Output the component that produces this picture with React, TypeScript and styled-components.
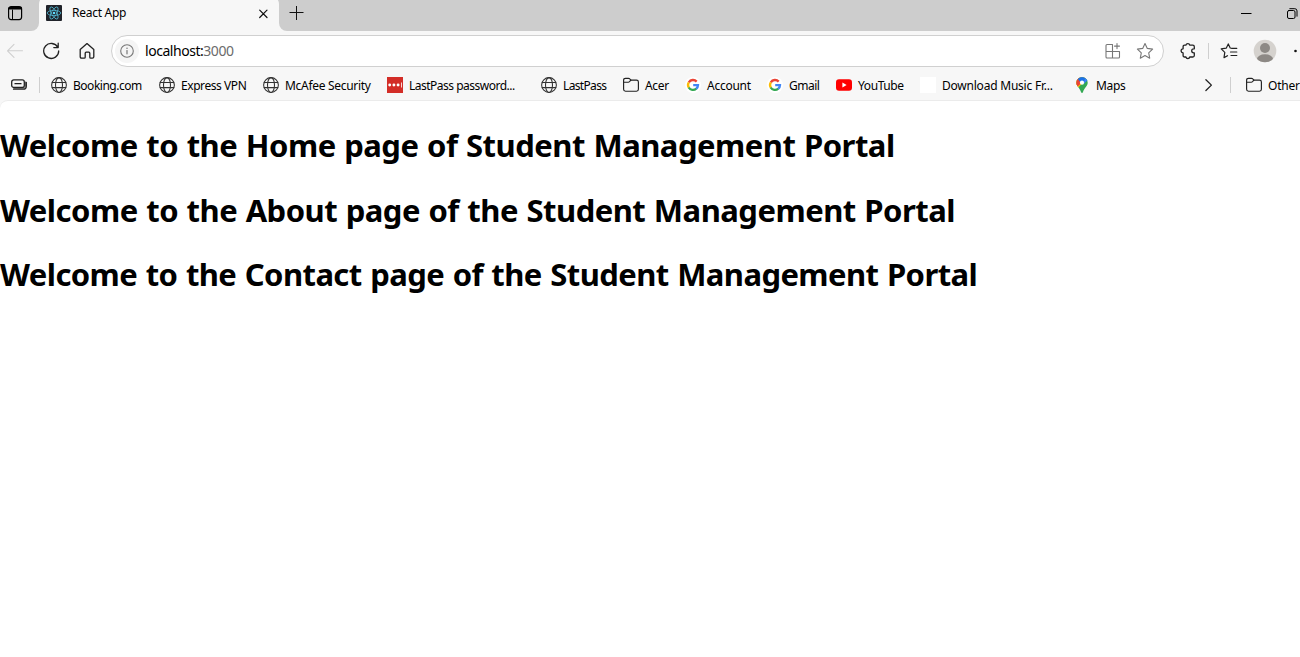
import React from 'react';
import styled, { createGlobalStyle } from 'styled-components';

const GlobalStyle = createGlobalStyle`
  html, body { margin: 0; background: #fff; overflow: hidden; }
  * { box-sizing: border-box; }
  svg { display: block; flex: none; }
`;

const Browser = styled.div`
  width: 1300px;
  height: 657px;
  overflow: hidden;
  background: #f7f7f7;
  color: #000;
  font-family: 'Noto Sans', 'Open Sans', sans-serif;
  display: flex;
  flex-direction: column;
`;

const TabBar = styled.header`
  display: flex;
  flex: none;
  height: 31px;
`;

const TabActions = styled.div`
  width: 39px;
  padding: 6px 0 0 8px;
  background: #cdcdcd;
  border-bottom-right-radius: 8px;
`;

const TabSlot = styled.div`
  width: 240px;
  background: linear-gradient(#cdcdcd 10px, #f7f7f7 10px);
  overflow: hidden;
`;

const Tab = styled.div`
  height: 35px;
  margin-top: -4px;
  padding: 9px 8px 0 7px;
  display: flex;
  align-items: flex-start;
  background: #f7f7f7;
  border-radius: 8px 8px 0 0;
`;

const TabTitle = styled.span`
  flex: 1;
  margin: -1px 0 0 10px;
  font-size: 12px;
  line-height: 17px;
  letter-spacing: -0.27px;
`;

const CloseSlot = styled.span`
  padding-top: 3px;
`;

const WindowBar = styled.div`
  flex: 1;
  display: flex;
  justify-content: space-between;
  padding: 6px 2px 0 10px;
  background: #cdcdcd;
  border-bottom-left-radius: 8px;
`;

const WindowButtons = styled.div`
  display: flex;
  gap: 35px;
  padding-top: 2px;
`;

const Toolbar = styled.nav`
  display: flex;
  flex: none;
  align-items: center;
  height: 40px;
  padding-left: 6px;
`;

const NavButtons = styled.div`
  display: flex;
  flex: none;
  gap: 18px;
  width: 105px;
`;

const AddressBar = styled.div`
  display: flex;
  flex: none;
  align-items: center;
  width: 1053px;
  height: 32px;
  padding: 0 9px 0 3px;
  background: #fff;
  border: 1px solid #d0d0d0;
  border-radius: 16px;
`;

const SiteInfo = styled.span`
  display: grid;
  place-items: center;
  width: 24px;
  height: 24px;
  border-radius: 50%;
  background: #f5f5f5;
`;

const Url = styled.span`
  flex: 1;
  margin-left: 6px;
  font-size: 14px;
  line-height: 20px;
  letter-spacing: -0.46px;
`;

const Port = styled.span`
  color: #6b6b6b;
`;

const AddressActions = styled.div`
  display: flex;
  gap: 14px;
`;

const ToolbarActions = styled.div`
  display: flex;
  align-items: center;
  flex: none;
  padding-left: 15px;
`;

const Divider = styled.span<{ $before: number; $after: number }>`
  flex: none;
  width: 1px;
  height: 16px;
  margin: 0 ${p => p.$after}px 0 ${p => p.$before}px;
  background: #cfcfcf;
`;

const AvatarSlot = styled.span`
  margin: 0 17px 0 15px;
`;

const BookmarkBar = styled.nav`
  display: flex;
  align-items: center;
  flex: none;
  height: 29px;
  padding: 0 0 1px 11px;
`;

const Bookmarks = styled.div`
  display: flex;
  flex: none;
  gap: 16px;
  width: 1152px;
`;

const Bookmark = styled.a`
  display: flex;
  align-items: center;
  gap: 6px;
  flex: none;
  height: 16px;
`;

const BookmarkLabel = styled.span<{ $width: number; $spacing: number }>`
  width: ${p => p.$width}px;
  font-size: 12px;
  line-height: 17px;
  letter-spacing: ${p => p.$spacing}px;
  white-space: nowrap;
`;

const BlankIcon = styled.span`
  width: 16px;
  height: 16px;
  background: #fff;
`;

const Page = styled.main`
  flex: 1;
  border-top: 1px solid #ebebeb;
  border-top-left-radius: 8px;
  background: #fff;
  padding-top: 22px;
`;

const Heading = styled.h1<{ $spacing: number; $gap: number }>`
  margin: 0 0 ${p => p.$gap}px;
  font-size: 31px;
  line-height: 44px;
  font-weight: 700;
  letter-spacing: ${p => p.$spacing}px;
  word-spacing: 1px;
  white-space: nowrap;
`;

const line = { fill: 'none', stroke: '#222', strokeLinecap: 'round', strokeLinejoin: 'round' } as const;

const TabActionsIcon = () => (
  <svg width="15" height="15" viewBox="0 0 15 15" {...line} stroke="#000">
    <rect x="0.6" y="0.6" width="13" height="13" rx="2.5" strokeWidth="1.2" />
    <path d="M1.6 2.3h11" strokeWidth="2.6" />
    <path d="M4.5 4v9.5" />
  </svg>
);

const ReactIcon = () => (
  <svg width="16" height="16" viewBox="0 0 16 16">
    <rect width="16" height="16" rx="1" fill="#20232a" />
    <g fill="none" stroke="#53b8d2" strokeWidth="0.8">
      <ellipse cx="8" cy="8" rx="6.8" ry="2.6" />
      <ellipse cx="8" cy="8" rx="6.8" ry="2.6" transform="rotate(60 8 8)" />
      <ellipse cx="8" cy="8" rx="6.8" ry="2.6" transform="rotate(120 8 8)" />
    </g>
    <circle cx="8" cy="8" r="1.3" fill="#61dafb" />
  </svg>
);

const CloseIcon = () => (
  <svg width="15" height="12" viewBox="0 0 15 12" {...line} stroke="#111" strokeWidth="1.2">
    <path d="M3.7 2.2 11 9.5M11 2.2 3.7 9.5" />
  </svg>
);

const PlusIcon = () => (
  <svg width="15" height="15" viewBox="0 0 15 15" {...line} stroke="#111" strokeLinecap="butt">
    <path d="M7.5 0v14M0.5 6.5h14" />
  </svg>
);

const MinimizeIcon = () => (
  <svg width="11" height="11" viewBox="0 0 11 11" {...line} stroke="#000" strokeLinecap="butt">
    <path d="M0 5.5h10.5" />
  </svg>
);

const RestoreIcon = () => (
  <svg width="11" height="11" viewBox="0 0 11 11" {...line} stroke="#000">
    <rect x="0.5" y="2.5" width="7.5" height="8" rx="1.5" />
    <path d="M2.8 0.7h5a2.2 2.2 0 0 1 2.2 2.2v5.3" />
  </svg>
);

const BackIcon = () => (
  <svg width="18" height="18" viewBox="0 0 18 18" {...line} stroke="#cfcfcf" strokeWidth="1.1">
    <path d="M8 2.3 1.5 8.8 8 15.3M1.8 8.8H16.5" />
  </svg>
);

const ReloadIcon = () => (
  <svg width="18" height="18" viewBox="0 0 18 18" {...line} strokeWidth="1.3">
    <path d="M15.8 5.4A7.5 7.5 0 1 0 16.7 9M16.2 1.2v4.4h-4.4" />
  </svg>
);

const HomeIcon = () => (
  <svg width="18" height="18" viewBox="0 0 18 18" {...line} strokeWidth="1.3">
    <path d="M2.2 7.6 9 1.6l6.8 6v7.2q0 1.4-1.4 1.4h-1.6q-1 0-1-1v-4q0-1-1-1H8.2q-1 0-1 1v4q0 1-1 1H3.6q-1.4 0-1.4-1.4z" />
  </svg>
);

const InfoIcon = () => (
  <svg width="14" height="14" viewBox="0 0 14 14" {...line} stroke="#777">
    <circle cx="7" cy="7" r="6.3" strokeWidth="1.1" />
    <path d="M7 6.5v3.3" strokeWidth="1.2" />
    <circle cx="7" cy="4.3" r=".75" fill="#777" stroke="none" />
  </svg>
);

const AppsIcon = () => (
  <svg width="18" height="18" viewBox="0 0 18 18" {...line} stroke="#777" strokeWidth="1.1">
    <path d="M8.5 2.5H3q-1 0-1 1V15q0 1 1 1h11.5q1 0 1-1V9.5H2M8.5 2.5V16" />
    <path d="M13 1.6v5M10.5 4.1h5" />
  </svg>
);

const StarIcon = () => (
  <svg width="18" height="18" viewBox="0 0 18 18" {...line} stroke="#777" strokeWidth="1.1">
    <path d="m9 1.5 2.3 4.9 5.3.7-3.9 3.7 1 5.4L9 13.6l-4.7 2.6 1-5.4L1.4 7.1l5.3-.7z" />
  </svg>
);

const PuzzleIcon = () => (
  <svg width="18" height="18" viewBox="0 0 18 18" {...line} strokeWidth="1.3">
    <path d="M6.9 3.2a2 2 0 0 1 3.9 0h3q1.5 0 1.5 1.5v2.1h-.6a2 2 0 0 0 0 4h.6v2.7q0 1.5-1.5 1.5h-3a2 2 0 0 1-3.9 0H5.6q-1.500 0-1.500-1.500v-2.700a2 2 0 0 1 0-4V4.700q0-1.500 1.500-1.500z" />
  </svg>
);

const FavoritesIcon = () => (
  <svg width="18" height="18" viewBox="0 0 18 18" {...line} strokeWidth="1.2">
    <path d="M12 6.3 10.2 6 8.3 1.9 6.2 6.2l-5 .7 3.6 3.5-.8 5.2 3.5-1.9M11.8 6.3h5M10.5 10h6.3M11 13.5h5.8" />
  </svg>
);

const AvatarIcon = () => (
  <svg width="24" height="24" viewBox="0 0 24 24">
    <clipPath id="avatar-clip"><circle cx="12" cy="12" r="11.3" /></clipPath>
    <circle cx="12" cy="12" r="11.3" fill="#d5d2ce" />
    <g fill="#8d8985" clipPath="url(#avatar-clip)">
      <circle cx="12" cy="9" r="5" />
      <ellipse cx="12" cy="20" rx="8" ry="4.7" />
    </g>
  </svg>
);

const MoreIcon = () => (
  <svg width="18" height="4" viewBox="0 0 18 4" fill="#111">
    <circle cx="1.5" cy="2" r="1.3" />
    <circle cx="8" cy="2" r="1.3" />
    <circle cx="14.500" cy="2" r="1.3" />
  </svg>
);

const WorkspaceIcon = () => (
  <svg width="16" height="12" viewBox="0 0 16 12" {...line} strokeWidth="1.3">
    <rect x="0.7" y="0.9" width="12.6" height="7.6" rx="2" />
    <path d="M4 4.7h6M2.5 10.2h9.8q3 0 3-3V3.3" />
    <path d="M3 9.6h9.5q2-.4 2-2V3" strokeWidth="1" stroke="#555" />
  </svg>
);

const GlobeIcon = () => (
  <svg width="16" height="16" viewBox="0 0 16 16" {...line} stroke="#333" strokeWidth="1.05">
    <circle cx="8" cy="8" r="7.4" />
    <ellipse cx="8" cy="8" rx="3.5" ry="7.4" />
    <path d="M1.2 5.4h13.6M1.2 10.6h13.6" />
  </svg>
);

const LastPassIcon = () => (
  <svg width="16" height="16" viewBox="0 0 16 16">
    <rect width="16" height="16" fill="#d32d27" />
    <g fill="#fff">
      <circle cx="2.7" cy="8" r="1.45" />
      <circle cx="6.9" cy="8" r="1.45" />
      <circle cx="11.1" cy="8" r="1.45" />
      <rect x="14" y="5.5" width=".8" height="5" />
    </g>
  </svg>
);

const FolderIcon = () => (
  <svg width="16" height="16" viewBox="0 0 16 16" {...line} strokeWidth="1.15">
    <path d="M.6 3.2q0-1.900 1.900-1.900h3q.8 0 1.300.6l1.100 1.200h5.600q1.900 0 1.900 1.900v7.300q0 1.900-1.900 1.900h-11Q.6 14.200.6 12.300z" />
    <path d="M.8 5.2h4.500q.7 0 1.200-.5l1.400-1.500" />
  </svg>
);

const GoogleIcon = () => (
  <svg width="16" height="16" viewBox="0 0 16 16">
    <circle cx="8" cy="8" r="8" fill="#fff" />
    <g fill="none" strokeWidth="2.3">
      <path d="M3.8 5.3A5 5 0 0 1 11.7 4.6" stroke="#ea4335" />
      <path d="M3.9 10.7A5 5 0 0 1 3.8 5.3" stroke="#fbbc05" />
      <path d="M11.3 11.7A5 5 0 0 1 3.7 10.5" stroke="#34a853" />
      <path d="M8.2 8.1H13A5 5 0 0 1 11.2 11.8" stroke="#4285f4" />
    </g>
  </svg>
);

const YouTubeIcon = () => (
  <svg width="16" height="16" viewBox="0 0 16 16">
    <rect y="2.3" width="16" height="11.4" rx="3" fill="#f00" />
    <path d="M6.4 5.6v4.8L10.6 8z" fill="#fff" />
  </svg>
);

const MapsIcon = () => (
  <svg width="16" height="16" viewBox="0 0 16 16">
    <clipPath id="pin-clip">
      <path d="M8 0a5.7 5.7 0 0 1 5.7 5.7c0 3.6-3.4 4.9-4.7 9.3-.3 1.3-1.7 1.3-2 0C5.7 10.6 2.3 9.3 2.3 5.7A5.7 5.7 0 0 1 8 0z" />
    </clipPath>
    <g clipPath="url(#pin-clip)">
      <rect width="16" height="16" fill="#34a853" />
      <path d="M2 0h12L2 13z" fill="#fbbc04" />
      <path d="M0 0h5L8 5.5 3.5 9.5 0 8z" fill="#ea4335" />
      <path d="M3.6 2 6 0h8v3.5L8 7z" fill="#1a73e8" />
      <path d="M9.5 7.5 12.8 3.2 11 1z" fill="#4285f4" />
    </g>
    <circle cx="8" cy="5.7" r="2.1" fill="#fff" />
  </svg>
);

const ChevronIcon = () => (
  <svg width="10" height="14" viewBox="0 0 10 14" {...line} strokeWidth="1.3">
    <path d="m2.9 1.7 5.5 5.4-5.5 5.4" />
  </svg>
);

const bookmarks = [
  { label: 'Booking.com', width: 70, spacing: -0.48, Icon: GlobeIcon },
  { label: 'Express VPN', width: 66, spacing: -0.43, Icon: GlobeIcon },
  { label: 'McAfee Security', width: 86, spacing: -0.3, Icon: GlobeIcon },
  { label: 'LastPass password...', width: 116, spacing: -0.5, Icon: LastPassIcon },
  { label: 'LastPass', width: 44, spacing: -0.65, Icon: GlobeIcon },
  { label: 'Acer', width: 24, spacing: -0.3, Icon: FolderIcon },
  { label: 'Account', width: 44, spacing: -0.25, Icon: GoogleIcon },
  { label: 'Gmail', width: 31, spacing: -0.5, Icon: GoogleIcon },
  { label: 'YouTube', width: 46, spacing: -0.4, Icon: YouTubeIcon },
  { label: 'Download Music Fr...', width: 116, spacing: -0.22, Icon: BlankIcon },
  { label: 'Maps', width: 29, spacing: -0.35, Icon: MapsIcon },
];

export default function App() {
  return (
    <>
      <GlobalStyle />
      <Browser>
        <TabBar>
          <TabActions><TabActionsIcon /></TabActions>
          <TabSlot>
            <Tab>
              <ReactIcon />
              <TabTitle>React App</TabTitle>
              <CloseSlot><CloseIcon /></CloseSlot>
            </Tab>
          </TabSlot>
          <WindowBar>
            <PlusIcon />
            <WindowButtons>
              <MinimizeIcon />
              <RestoreIcon />
            </WindowButtons>
          </WindowBar>
        </TabBar>
        <Toolbar>
          <NavButtons>
            <BackIcon />
            <ReloadIcon />
            <HomeIcon />
          </NavButtons>
          <AddressBar>
            <SiteInfo><InfoIcon /></SiteInfo>
            <Url>localhost:<Port>3000</Port></Url>
            <AddressActions>
              <AppsIcon />
              <StarIcon />
            </AddressActions>
          </AddressBar>
          <ToolbarActions>
            <PuzzleIcon />
            <Divider $before={11} $after={11} />
            <FavoritesIcon />
            <AvatarSlot><AvatarIcon /></AvatarSlot>
            <MoreIcon />
          </ToolbarActions>
        </Toolbar>
        <BookmarkBar>
          <WorkspaceIcon />
          <Divider $before={12} $after={11} />
          <Bookmarks>
            {bookmarks.map(({ label, width, spacing, Icon }) => (
              <Bookmark key={label}>
                <Icon />
                <BookmarkLabel $width={width} $spacing={spacing}>{label}</BookmarkLabel>
              </Bookmark>
            ))}
          </Bookmarks>
          <ChevronIcon />
          <Divider $before={17} $after={15} />
          <Bookmark>
            <FolderIcon />
            <BookmarkLabel $width={32} $spacing={-0.2}>Other</BookmarkLabel>
          </Bookmark>
        </BookmarkBar>
        <Page>
          <Heading $spacing={-0.5} $gap={21}>Welcome to the Home page of Student Management Portal</Heading>
          <Heading $spacing={-0.51} $gap={20}>Welcome to the About page of the Student Management Portal</Heading>
          <Heading $spacing={-0.57} $gap={20}>Welcome to the Contact page of the Student Management Portal</Heading>
        </Page>
      </Browser>
    </>
  );
}
